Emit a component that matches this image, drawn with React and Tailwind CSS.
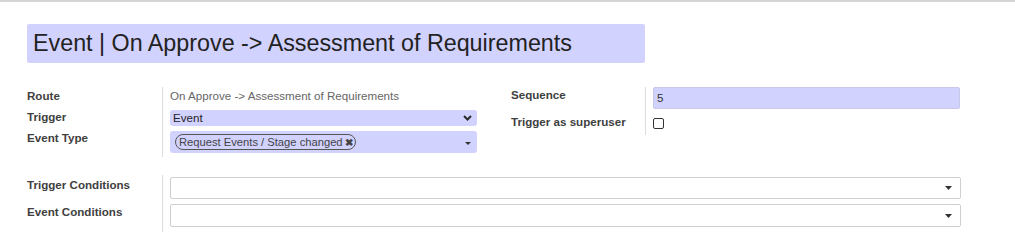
import React from "react";

function Caret({ className = "" }) {
    return (
        <svg width="7" height="4" viewBox="0 0 7 4" className={className}>
            <path d="M0 0 L7 0 L3.5 4 Z" fill="#333" />
        </svg>
    );
}

function Chevron() {
    return (
        <svg width="9" height="6" viewBox="0 0 9 6">
            <path
                d="M1 1 L4.5 4.5 L8 1"
                fill="none"
                stroke="#2a2a2a"
                strokeWidth="2"
            />
        </svg>
    );
}

const label = "font-bold text-[#404040] leading-[14px] whitespace-nowrap";
const sep = "border-l border-[#dedede] pl-[7px]";

export default function App() {
    return (
        <div className="w-[1015px] h-[248px] bg-white border-t-2 border-[#d6d6d6] font-['Liberation_Sans',Arial,sans-serif] text-[11.6px] text-[#222] overflow-hidden">
            <div className="pl-[27px] pt-[22px]">
                {/* Title */}
                <div className="w-[618px] h-[39px] bg-[#d2d2ff] rounded-[2px] flex items-center pl-[6px] text-[23.3px] text-[#222] leading-none">
                    Event | On Approve -&gt; Assessment of Requirements
                </div>

                {/* Upper groups */}
                <div className="flex items-start mt-[24px]">
                    <div className="grid grid-cols-[135px_315px]">
                        <div className={`${label} h-[22px] pt-[2px]`}>Route</div>
                        <div className={`${sep} h-[22px] pt-[2px] leading-[14px] text-[#666]`}>
                            On Approve -&gt; Assessment of Requirements
                        </div>

                        <div className={`${label} pt-[1px]`}>Trigger</div>
                        <div className={`${sep} pt-[1px] pb-[3px]`}>
                            <div className="h-[16px] bg-[#d2d2ff] rounded-[3px] flex items-center justify-between pl-[3px] pr-[5px]">
                                <span className="leading-[14px]">Event</span>
                                <Chevron />
                            </div>
                        </div>

                        <div className={`${label} pt-[2px]`}>Event Type</div>
                        <div className={`${sep} pt-[2px] pb-[4px]`}>
                            <div className="h-[22px] bg-[#d2d2ff] rounded-[3px] flex items-center justify-between pl-[5px] pr-[6px]">
                                <span className="h-[16px] border-[1.5px] border-[#555] rounded-full pl-[3px] pr-[2px] flex items-center gap-[2px] text-[#444] text-[11.2px] leading-[13px]">
                                    Request Events / Stage changed
                                    <span className="text-[10px] font-bold text-[#444]">✖</span>
                                </span>
                                <svg width="6" height="3" viewBox="0 0 6 3" className="mt-[3px]">
                                    <path d="M0 0 L6 0 L3 3 Z" fill="#333" />
                                </svg>
                            </div>
                        </div>
                    </div>

                    <div className="grid grid-cols-[134px_315px] ml-[34px]">
                        <div className={`${label} pt-[1px]`}>Sequence</div>
                        <div className={sep}>
                            <div className="h-[22px] bg-[#d2d2ff] rounded-[2px] border border-[#c8c8ea] flex items-center pl-[3px] text-[#333]">
                                5
                            </div>
                        </div>

                        <div className={`${label} pt-[6px]`}>Trigger as superuser</div>
                        <div className={`${sep} pt-[9px] pb-[6px]`}>
                            <div className="w-[11px] h-[11px] border-[1.5px] border-[#333] rounded-[2px] bg-white" />
                        </div>
                    </div>
                </div>

                {/* Conditions */}
                <div className="grid grid-cols-[135px_799px] mt-[18px]">
                    <div className={`${label} pt-[3px]`}>Trigger Conditions</div>
                    <div className={`${sep} pt-[2px] pb-[3px]`}>
                        <div className="h-[22px] bg-white border border-[#cfcfcf] rounded-[2px] flex items-center justify-end pr-[8px]">
                            <Caret />
                        </div>
                    </div>

                    <div className={`${label} pt-[3px]`}>Event Conditions</div>
                    <div className={`${sep} pt-[2px] pb-[5px]`}>
                        <div className="h-[23px] bg-white border border-[#cfcfcf] rounded-[2px] flex items-center justify-end pr-[8px]">
                            <Caret />
                        </div>
                    </div>
                </div>
            </div>
        </div>
    );
}
